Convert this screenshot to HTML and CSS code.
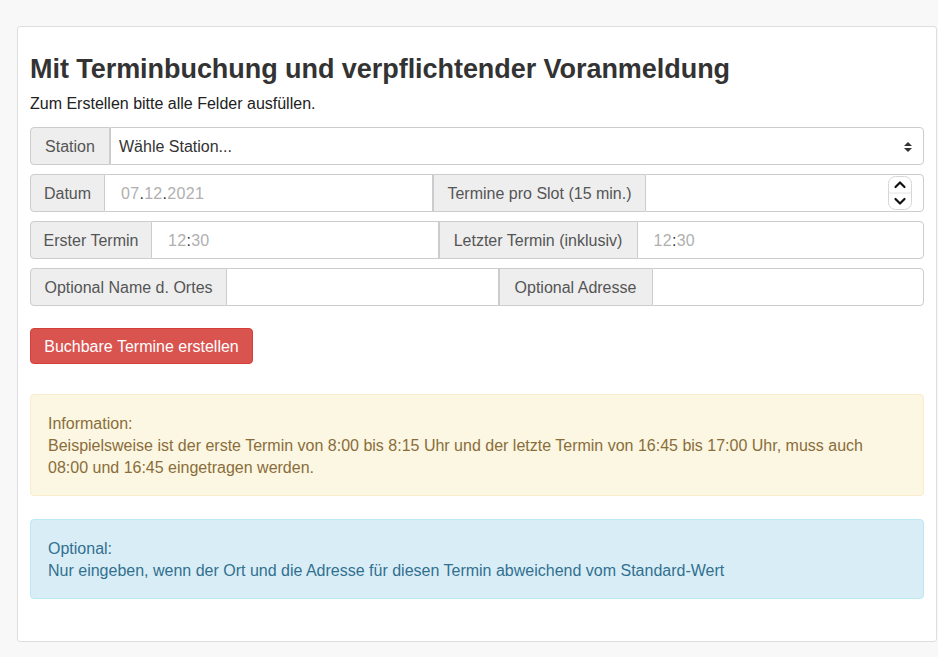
FILE: index.html
```html
<!DOCTYPE html>
<html lang="de">
<head>
<meta charset="utf-8">
<title>Terminbuchung</title>
<link rel="stylesheet" href="styles.css">
</head>
<body>
<div class="card">
  <h1 class="title">Mit Terminbuchung und verpflichtender Voranmeldung</h1>
  <p class="lead">Zum Erstellen bitte alle Felder ausfüllen.</p>

  <div class="row">
    <span class="addon a-station">Station</span>
    <div class="field select">
      <span class="select-text">Wähle Station...</span>
      <svg class="select-arrow" width="10" height="12" viewBox="0 0 10 12"><path d="M1 5 L5 1 L9 5 Z M1 7 L5 11 L9 7 Z" fill="#333"/></svg>
    </div>
  </div>

  <div class="row">
    <span class="addon a-datum">Datum</span>
    <div class="field f-datum"><span class="ph">07<b>.</b>12<b>.</b>2021</span></div>
    <span class="addon a-slot">Termine pro Slot (15 min.)</span>
    <div class="field f-grow number">
      <span class="spinner">
        <svg width="24" height="34" viewBox="0 0 24 34">
          <rect x="0.5" y="0.5" width="23" height="33" rx="7" fill="#fff" stroke="#d6d6d6"/>
          <line x1="1" y1="17" x2="23" y2="17" stroke="#e4e4e4"/>
          <path d="M7.5 11 L12 6.5 L16.5 11" fill="none" stroke="#111" stroke-width="2.2" stroke-linecap="round" stroke-linejoin="round"/>
          <path d="M7.5 23 L12 27.5 L16.5 23" fill="none" stroke="#111" stroke-width="2.2" stroke-linecap="round" stroke-linejoin="round"/>
        </svg>
      </span>
    </div>
  </div>

  <div class="row">
    <span class="addon a-erster">Erster Termin</span>
    <div class="field f-grow"><span class="ph ph-time">12<b>:</b>30</span></div>
    <span class="addon a-letzter">Letzter Termin (inklusiv)</span>
    <div class="field f-grow"><span class="ph ph-time">12<b>:</b>30</span></div>
  </div>

  <div class="row">
    <span class="addon a-name">Optional Name d. Ortes</span>
    <div class="field f-grow"></div>
    <span class="addon a-adresse">Optional Adresse</span>
    <div class="field f-grow"></div>
  </div>

  <button class="btn-danger" type="button">Buchbare Termine erstellen</button>

  <div class="alert alert-warning">
    <p>Information:</p>
    <p>Beispielsweise ist der erste Termin von 8:00 bis 8:15 Uhr und der letzte Termin von 16:45 bis 17:00 Uhr, muss auch 08:00 und 16:45 eingetragen werden.</p>
  </div>

  <div class="alert alert-info">
    <p>Optional:</p>
    <p>Nur eingeben, wenn der Ort und die Adresse für diesen Termin abweichend vom Standard-Wert</p>
  </div>
</div>
</body>
</html>
```

FILE: styles.css
```css
* { box-sizing: border-box; }
html, body { margin: 0; padding: 0; }
body {
  background: #f8f8f8;
  font-family: "Liberation Sans", Arial, Helvetica, sans-serif;
  font-size: 16px;
  line-height: 22px;
  color: #333;
  padding: 26px 1px 0 17px;
}
.card {
  background: #fff;
  border: 1px solid #dedede;
  border-radius: 3px;
  padding: 22px 12px 41px 12px;
  height: 616px;
}
.title {
  margin: 0;
  font-size: 27px;
  line-height: 40px;
  font-weight: bold;
  color: #333;
  letter-spacing: -0.05px;
}
.lead {
  margin: 0 0 8px 0;
  font-size: 16px;
  line-height: 30px;
  color: #222;
}
.row {
  display: flex;
  height: 38px;
  margin-bottom: 9px;
}
.addon {
  flex: 0 0 auto;
  display: flex;
  align-items: center;
  justify-content: center;
  padding-top: 2px;
  background: #eeeeee;
  border: 1px solid #cccccc;
  color: #555;
  font-size: 16px;
  white-space: nowrap;
}
.row > .addon:first-child { border-radius: 4px 0 0 4px; }
.row > .addon:not(:first-child) { border-left: 1px solid #ccc; border-right: 0; }
.field {
  display: flex;
  align-items: center;
  padding-top: 2px;
  background: #fff;
  border: 1px solid #cccccc;
  border-left: 0;
  padding-left: 12px;
  padding-right: 12px;
  color: #555;
  min-width: 0;
}
.row > .field:last-child { border-left: 1px solid #ccc; border-radius: 0 4px 4px 0; }
.select { flex: 1 1 auto; justify-content: space-between; padding-left: 8px; padding-right: 10px; color: #333; }
.select-text { color: #333; }
.a-station { width: 80px; }
.a-datum { width: 75px; }
.f-datum { flex: 0 0 328px; padding-left: 16px; }
.a-slot { width: 212px; }
.f-grow { flex: 1 1 0; }
.a-erster { width: 122px; }
.a-letzter { width: 198px; }
.a-name { width: 197px; }
.a-adresse { width: 153px; }
.ph { color: #b0b0b0; letter-spacing: 0.3px; }
.ph b { color: #333; font-weight: normal; }
.ph-time { padding-left: 4px; }
.number { justify-content: flex-end; padding-right: 11px; padding-top: 0; }
.spinner { display: flex; }
.btn-danger {
  display: block;
  margin-top: 22px;
  width: 223px;
  height: 36px;
  background: #d9534f;
  border: 1px solid #d43f3a;
  border-radius: 4px;
  color: #fff;
  font-family: "Liberation Sans", Arial, Helvetica, sans-serif;
  font-size: 16px;
  padding: 1px 0 0 0;
}
.alert {
  border-radius: 4px;
  border: 1px solid transparent;
  padding: 18px 17px 17px 17px;
  font-size: 16px;
  line-height: 22px;
}
.alert p { margin: 0; }
.alert-warning {
  margin-top: 30px;
  background: #fbf7e2;
  border-color: #faebcc;
  color: #8a6d3b;
  padding-bottom: 16px;
}
.alert-info {
  margin-top: 23px;
  background: #d9edf7;
  border-color: #bce8f1;
  color: #31708f;
  padding-bottom: 16px;
}
```
